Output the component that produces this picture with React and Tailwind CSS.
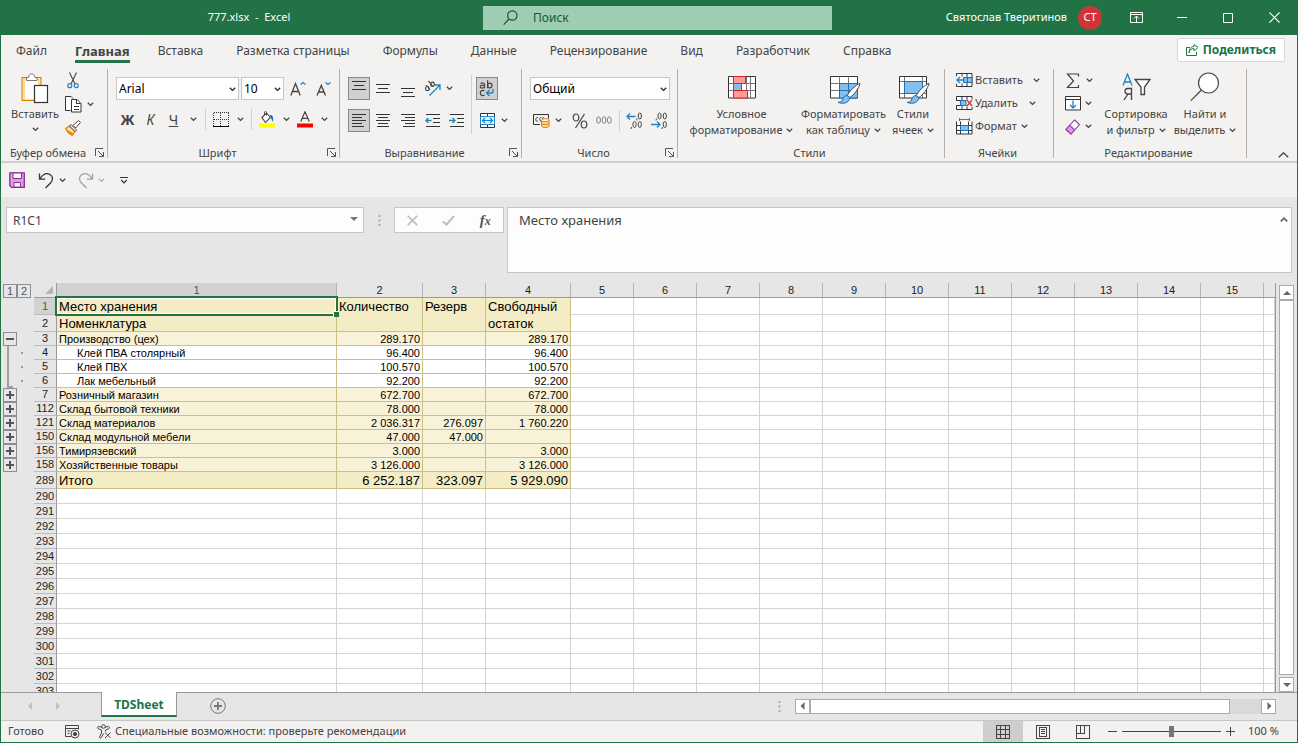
import React from "react";

const Chevron = ({ className = "text-[#444]" }) => (
  <svg className={`shrink-0 ${className}`} width="7" height="5" viewBox="0 0 7 5" fill="none" stroke="currentColor" strokeWidth="1.3">
    <path d="M.8 .8 3.5 3.4 6.2 .8" />
  </svg>
);

const PasteIcon = () => (
  <svg width="28" height="31" viewBox="0 0 28 31" fill="none">
    <rect x="1" y="4.5" width="19" height="23" fill="#fddc9c" stroke="#e07b00" />
    <path d="M4 7h13v19H4z" fill="#fff" />
    <path d="M5.500 7.500V4.500h2c.5-5 6-5 6.500 0h2v3z" fill="#fff" stroke="#777" />
    <rect x="13.5" y="12.500" width="13" height="17" fill="#fff" stroke="#333" strokeWidth="1.200" />
  </svg>
);

const CutIcon = () => (
  <svg width="12" height="17" viewBox="0 0 12 17" fill="none">
    <path d="M2.500 .5 8 12M9.500 .5 4 12" stroke="#444" strokeWidth="1.100" />
    <circle cx="2.800" cy="13.700" r="2" stroke="#1f83c9" strokeWidth="1.200" />
    <circle cx="9.200" cy="13.700" r="2" stroke="#1f83c9" strokeWidth="1.200" />
  </svg>
);

const CopyIcon = () => (
  <svg width="17" height="17" viewBox="0 0 17 17" fill="none" stroke="#333">
    <path d="M5.500 14.500h-5V.5h5.500l2 2" fill="#fff" />
    <path d="M6.500 3.500h5.500l4 4v8.500H6.500z" fill="#fff" />
    <path d="M11.500 3.500v4h4M9 10.500h5M9 13.500h5" />
  </svg>
);

const BrushIcon = () => (
  <svg width="16" height="16" viewBox="0 0 16 16" fill="none">
    <path d="M.8 8.500 4.500 6 10 11.500 7 15.300C4.500 14 2 12 .8 8.500z" fill="#fddc9c" stroke="#e07b00" strokeWidth="1.200" />
    <path d="M1.500 9.500 8 13 6.500 15C4 14 2.500 12 1.500 9.500z" fill="#e8842a" />
    <path d="m4.500 6 1.500-1.500L11.500 10 10 11.500z" fill="#fff" stroke="#444" />
    <path d="m8 5.500 5.500-5 2 2-5 5.500z" fill="#fff" stroke="#444" />
  </svg>
);

const GrowFont = ({ down }) => (
  <svg width="16" height="16" viewBox="0 0 16 16" fill="none">
    {down ? (
      <path d="M1 14.500 5.300 4.500 9.500 14.500M2.500 11h5.500" stroke="#444" strokeWidth="1.300" />
    ) : (
      <path d="M.8 14.500 5.500 2.500 10.200 14.500M2.500 10.500h6" stroke="#444" strokeWidth="1.300" />
    )}
    <path d={down ? "m9.500 1.500 2.500 2 2.500-2" : "M10.500 3.500 13 1.500l2.500 2"} stroke="#1f83c9" strokeWidth="1.300" />
  </svg>
);

const BordersIcon = () => (
  <svg width="16" height="16" viewBox="0 0 16 16" fill="none" stroke="#333" shapeRendering="crispEdges">
    <path d="M.5 .5h15M.5 7.500h15M.5 .5v13M7.500 .5v13M15.500 .5v13" strokeDasharray="1 1" />
    <path d="M0 14.500h16" stroke="#000" strokeWidth="1" />
  </svg>
);

const FillIcon = () => (
  <svg width="16" height="17" viewBox="0 0 16 17" fill="none">
    <path d="M3 6.500 7.500 2l4 4.500-5 5z" fill="#fff" stroke="#444" strokeWidth="1.100" />
    <path d="M7.500 4.500V1.500c0-1.300-2-1.300-2 0V4" stroke="#444" />
    <path d="M11 4c3 0 3.500 2.500 3 6.500-1-.5-1-2.500-2.500-4z" fill="#1f6fb5" />
    <path d="M0 12.500h16v4H0z" fill="#ff0" />
  </svg>
);

const FontColorIcon = () => (
  <svg width="16" height="17" viewBox="0 0 16 17" fill="none">
    <path d="M3.800 10.500 8 .8l4.200 9.700M5.300 7.300h5.400" stroke="#444" strokeWidth="1.200" />
    <path d="M0 12.500h16v4H0z" fill="#f00" />
  </svg>
);

const Lines = ({ rows }) => (
  <svg width="14" height="16" viewBox="0 0 14 16" stroke="#333" shapeRendering="crispEdges">
    {rows.map(([x1, x2, y]) => (
      <path key={y} d={`M${x1} ${y}.5H${x2}`} />
    ))}
  </svg>
);

const OrientationIcon = () => (
  <svg width="17" height="17" viewBox="0 0 17 17" fill="none">
    <g stroke="#444" strokeWidth="1.100">
      <ellipse cx="3.300" cy="8.800" rx="1.800" ry="2" />
      <path d="M1.500 6.200c1.500-1.200 3-.2 4.200 3.600M4.500 .8l4.500 6" />
      <ellipse cx="8.500" cy="4.300" rx="1.900" ry="2.200" />
    </g>
    <path d="M5.500 15.500 15.500 5.500M11 5h5v5" stroke="#1f83c9" strokeWidth="1.300" />
  </svg>
);

const WrapIcon = () => (
  <svg width="16" height="18" viewBox="0 0 16 18" fill="none" strokeWidth="1.200">
    <g stroke="#444">
      <path d="M1.500 3.500c1.500-1 4-.8 4 1.200v3.500M5.500 5.300c-2-.2-4.300 0-4.300 1.500s3 1.800 4.300 0M8.600 .3v8" />
      <ellipse cx="10.800" cy="5.600" rx="2.200" ry="2.400" />
      <path d="M5.500 11c-2-1.300-4.200-.3-4.200 2s2.200 3.300 4.200 2" />
    </g>
    <path d="M14 9v2.500c0 1-.5 1.500-1.500 1.500H7.500M10.500 10l-3 3 3 3" stroke="#1f83c9" strokeWidth="1.400" />
  </svg>
);

const IndentIcon = ({ right }) => (
  <svg width="15" height="15" viewBox="0 0 15 15" fill="none">
    <path d="M1 1.500h14M8 5.500h7M8 9.500h7M1 13.500h14" stroke="#333" shapeRendering="crispEdges" />
    <path d={right ? "M0 7.500h6M3.500 5 6 7.500 3.500 10" : "M6.500 7.500H.8M3.300 5 .8 7.500l2.500 2.500"} stroke="#1f83c9" strokeWidth="1.300" />
  </svg>
);

const MergeIcon = () => (
  <svg width="15" height="15" viewBox="0 0 15 15" fill="none">
    <path d="M.5 .5h14v14H.5zM7.500 .5v3M7.500 11.500v3" fill="#fff" stroke="#333" />
    <path d="M.5 3.500h14v8H.5z" fill="#e3f1fb" stroke="#1f83c9" />
    <path d="M2.500 7.500h10M5 5 2.500 7.500 5 10M10 5l2.500 2.500L10 10" stroke="#1f83c9" strokeWidth="1.200" />
  </svg>
);

const CurrencyIcon = () => (
  <svg width="17" height="14" viewBox="0 0 17 14" fill="none">
    <path d="M7 10.500H.5V.5h15v4" stroke="#333" />
    <path d="M5 3.500c-3-.7-3 4.500 0 3.800M8.500 3.300c-2.500 0-2.500 4 0 4M11 3.300c-1 0-1.500 1-1.500 2" stroke="#444" />
    <path d="M8.500 6.200v6c1 1.800 6.500 1.800 7.500 0v-6" fill="#fddc9c" stroke="#e07b00" />
    <ellipse cx="12.200" cy="6.200" rx="3.700" ry="1.500" fill="#fff" stroke="#e07b00" />
    <path d="M8.500 9.200c1 1.800 6.500 1.800 7.500 0" stroke="#e07b00" />
  </svg>
);

const PercentIcon = () => (
  <svg width="16" height="16" viewBox="0 0 16 16" fill="none" stroke="#444" strokeWidth="1.200">
    <ellipse cx="4" cy="4.500" rx="2.800" ry="3.500" />
    <ellipse cx="12" cy="11.500" rx="2.800" ry="3.500" />
    <path d="M12.500 1 3.500 15" />
  </svg>
);

const ThousandsIcon = () => (
  <svg width="17" height="10" viewBox="0 0 17 10" fill="none" stroke="#777">
    <ellipse cx="2.700" cy="4" rx="2" ry="3.500" />
    <ellipse cx="8.400" cy="4" rx="2" ry="3.500" />
    <ellipse cx="14.100" cy="4" rx="2" ry="3.500" />
  </svg>
);

const DecimalIcon = ({ less }) => (
  <svg width="17" height="17" viewBox="0 0 17 17" fill="none">
    <g stroke="#444">
      <ellipse cx="13.800" cy="4" rx="1.600" ry="3" />
      <ellipse cx="13.800" cy="12.500" rx="1.600" ry="3" />
      {less ? <ellipse cx="8.500" cy="4" rx="1.600" ry="3" /> : <ellipse cx="8.500" cy="12.500" rx="1.600" ry="3" />}
      <path d={less ? "M5.500 6.500 5 8.500M11.200 15v2" : "M10.800 6.500v2M5.500 15 5 17"} />
    </g>
    <path d={less ? "M0 12.500h9M6 9.500l3 3-3 3" : "M9.500 4.500H1M4 1.500 1 4.500l3 3"} stroke="#1f83c9" strokeWidth="1.300" />
  </svg>
);

const ConditionalIcon = () => (
  <svg width="28" height="23" viewBox="0 0 28 23" fill="none">
    <path d="M.5 .5h27v21.500H.5z" fill="#fff" />
    <path d="M.5 7.500h27M.5 14.500h27M5.500 .5v21M18.500 .5v21M22.500 .5v21" stroke="#777" />
    <path d="M.5 .5h27v21.500H.5z" stroke="#333" />
    <path d="M5.500 .5h12v7h-12z" fill="#ff9a9a" stroke="#d22" />
    <path d="M5.500 7.500h8v7h-8z" fill="#83beec" stroke="#1f6fb5" />
    <path d="M5.500 14.500h14V22h-14z" fill="#ff9a9a" stroke="#d22" />
  </svg>
);

const PaintBrush = () => (
  <g>
    <path d="M30 7.500C26 8.500 19 15.500 17.300 19.500l2.500 2C23.500 19.500 29 12.500 30 7.500z" fill="#fff" stroke="#444" />
    <path d="M17 19.500c-3 0-4 2.500-4.500 4.500-.5 1.500-2.500 2.300-4.500 2.300 3 1.500 11 2 11.800-4.500z" fill="#83beec" stroke="#1f6fb5" />
  </g>
);

const FormatTableIcon = () => (
  <svg className="overflow-visible" width="28" height="23" viewBox="0 0 28 23" fill="none">
    <path d="M.5 .5h27v21.500H.5z" fill="#fff" stroke="#333" />
    <path d="M9.500 7.500h18V22h-18z" fill="#83beec" />
    <path d="M.5 7.500h9M.5 14.500h9M9.500 .5v21.500M18.500 .5v7" stroke="#777" />
    <path d="M9.500 22V7.500h18V22zM9.500 14.500h18M18.500 7.500V22" stroke="#1f6fb5" />
    <PaintBrush />
  </svg>
);

const CellStylesIcon = () => (
  <svg className="overflow-visible" width="28" height="23" viewBox="0 0 28 23" fill="none">
    <path d="M.5 .5h27v21.500H.5z" fill="#fff" />
    <path d="M.5 5.500h27M.5 17.500h27M5.500 .5v21.500M23.500 .5v21.500" stroke="#777" />
    <path d="M.5 .5h27v21.500H.5z" stroke="#333" />
    <path d="M5.500 5.500h18v12h-18z" fill="#83beec" stroke="#1f6fb5" />
    <PaintBrush />
  </svg>
);

const CellsInsertIcon = () => (
  <svg width="17" height="15" viewBox="0 0 17 15" fill="none">
    <path d="M1 .5h15v13H1z" fill="#fff" />
    <path d="M.5 3.500V.5H16v13H.5v-3M6 .5v13M11 .5v13M1 4.500h15M1 9.500h15" stroke="#333" />
    <path d="M0 3.500h8v7H0z" fill="#f3f2f1" />
    <path d="M7.500 4.500H16v5H7.500zM11.500 4.500v5" fill="#83beec" stroke="#1f6fb5" />
    <path d="M8.500 7H1M4 4 1 7l3 3" stroke="#1f83c9" strokeWidth="1.400" />
  </svg>
);

const CellsDeleteIcon = () => (
  <svg width="17" height="15" viewBox="0 0 17 15" fill="none">
    <path d="M.5 .5H16v13H.5z" fill="#fff" />
    <path d="M.5 4.500V.5H16v3M.5 9.500v4H16v-3M6 .5v13M11 .5v13M.5 4.500H6M.5 9.500H6" stroke="#333" />
    <path d="M0 5h4v4H0z" fill="#f3f2f1" />
    <path d="M4.500 4.500H10v5H4.500z" fill="#83beec" stroke="#1f6fb5" />
    <path d="M10.500 3.500H17v7h-6.500z" fill="#f3f2f1" />
    <path d="m11 4 5 6M16 4l-5 6" stroke="#e0343a" strokeWidth="1.400" />
  </svg>
);

const CellsFormatIcon = () => (
  <svg width="17" height="17" viewBox="0 0 17 17" fill="none">
    <path d="M.5 3.500h15.500v12.500H.5z" fill="#fff" />
    <path d="M.5 3.500V16H16V3.500M4.500 3.500V16M12.500 3.500V16M.5 7.500H16M.5 12.500H16" stroke="#333" />
    <path d="M4.500 7.500h8v5h-8z" fill="#83beec" stroke="#1f6fb5" />
    <path d="M3.500 1.500h10M3.500 0v3M13.500 0v3" stroke="#1f83c9" />
  </svg>
);

const SigmaIcon = () => (
  <svg width="14" height="16" viewBox="0 0 14 16" fill="none" stroke="#444" strokeWidth="1.200">
    <path d="M12.500 3.500V1h-11l6 7-6 6.500h11V12" />
  </svg>
);

const FillDownIcon = () => (
  <svg width="16" height="15" viewBox="0 0 16 15" fill="none">
    <path d="M.5 .5h15v13.500H.5zM.5 3.500h15" fill="#fff" stroke="#333" />
    <path d="M8 4.500V12M5 9l3 3 3-3" stroke="#1f83c9" strokeWidth="1.300" />
  </svg>
);

const EraserIcon = () => (
  <svg width="16" height="16" viewBox="0 0 16 16" fill="none" stroke="#8f3fa8" strokeWidth="1.100">
    <path d="m9.500 1 5 4.500-8.500 9.500-5-4.500z" fill="#fff" />
    <path d="m4.700 6.500 5 4.300L6 15l-5-4.500z" fill="#d9a0e2" />
  </svg>
);

const SortFilterIcon = () => (
  <svg width="29" height="28" viewBox="0 0 29 28" fill="none" strokeWidth="1.300">
    <path d="M1 12.500 5.500 1l4.500 11.500M2.500 9h6" stroke="#1f83c9" />
    <path d="M9.500 27V15.500H6c-4 0-4 5.500 0 5.500h3.500M6 21l-4 6" stroke="#444" />
    <path d="M13 6.500h15l-5.500 7.500v7.500h-3.500V14z" fill="#fff" stroke="#444" />
  </svg>
);

const FindIcon = () => (
  <svg width="30" height="30" viewBox="0 0 30 30" fill="none" stroke="#444" strokeWidth="1.200">
    <circle cx="18.500" cy="11" r="10" fill="#fff" />
    <path d="M11.500 18 .8 28.700" />
  </svg>
);

const LauncherIcon = () => (
  <svg width="9" height="9" viewBox="0 0 9 9" fill="none" stroke="#555">
    <path d="M.5 8V.5H8M3 3l5 5M8.500 4v4.500H4" />
  </svg>
);

const Group = ({ label, width, launcher, children }) => (
  <section aria-label={label} className={`flex h-[89px] shrink-0 flex-col border-r border-[#b3b0ad] ${width}`}>
    <div className="flex h-[78px] min-w-0 shrink-0">{children}</div>
    <div className="flex h-[11px] items-center pr-[3px] text-[11px] leading-[11px]">
      <span className="flex-1 whitespace-nowrap text-center">{label}</span>
      {launcher && (
        <button aria-label={`Параметры: ${label}`}>
          <LauncherIcon />
        </button>
      )}
    </div>
  </section>
);

const IconBtn = ({ label, w = "w-[24px]", h = "h-[23px]", on, children }) => (
  <button
    aria-label={label}
    className={`flex shrink-0 items-center justify-center ${w} ${h} ${on ? "border border-[#8a8886] bg-[#d2d0ce]" : ""}`}
  >
    {children}
  </button>
);

const Combo = ({ label, value, w }) => (
  <div className={`relative h-[23px] shrink-0 ${w}`}>
    <select aria-label={label} className="h-full w-full appearance-none border border-[#c8c6c4] bg-white pl-[2px] text-[12px] leading-[20px] text-black">
      <option>{value}</option>
    </select>
    <Chevron className="pointer-events-none absolute right-[3px] top-[10px] text-[#222]" />
  </div>
);

const VRule = ({ className }) => <div className={`w-px shrink-0 bg-[#d2d0ce] ${className}`} />;

const BigBtn = ({ icon, l1, l2, w }) => (
  <button className={`flex shrink-0 flex-col items-center leading-[16px] ${w}`}>
    <span className="mb-[2px] flex h-[34px] items-center">{icon}</span>
    <span className="whitespace-nowrap">{l1}</span>
    <span className="flex items-center gap-1 whitespace-nowrap">
      {l2}
      <Chevron />
    </span>
  </button>
);

const TABS = ["Файл", "Главная", "Вставка", "Разметка страницы", "Формулы", "Данные", "Рецензирование", "Вид", "Разработчик", "Справка"];

const TitleBar = () => (
  <header className="flex h-[35px] shrink-0 items-center bg-[#217346] text-[11px] text-white">
    <h1 className="w-[482px] shrink-0 whitespace-pre pl-[14px] text-center">777.xlsx  -  Excel</h1>
    <label className="flex h-[24px] w-[349px] shrink-0 items-center bg-[#9fcdb3] pl-[20px] text-[12px] text-[#0e5c2f]">
      <svg width="15" height="16" viewBox="0 0 15 16" fill="none" stroke="currentColor" strokeWidth="1.200">
        <circle cx="9.300" cy="5.500" r="4.700" />
        <path d="M6 9 .7 14.700" />
      </svg>
      <input aria-label="Поиск" placeholder="Поиск" className="ml-[15px] w-[200px] bg-transparent outline-none placeholder:text-[#0e5c2f]" />
    </label>
    <div className="flex flex-1 items-center justify-end">
      <span className="whitespace-nowrap">Святослав Тверитинов</span>
      <span className="ml-[11px] flex size-[24px] items-center justify-center rounded-full bg-[#d13438]">СТ</span>
      <button aria-label="Параметры отображения ленты" className="ml-[11px] flex h-[34px] w-[46px] items-center justify-center">
        <svg width="13" height="11" viewBox="0 0 13 11" fill="none" stroke="#fff">
          <path d="M.5 .5h12v10H.5zM.5 2.500h12M6.500 10V4.500M4 6.500 6.500 4 9 6.500" />
        </svg>
      </button>
      <button aria-label="Свернуть" className="flex h-[34px] w-[46px] items-center justify-center">
        <svg width="10" height="2" viewBox="0 0 10 2"><path d="M0 .5h10" stroke="#fff" /></svg>
      </button>
      <button aria-label="Развернуть" className="flex h-[34px] w-[46px] items-center justify-center">
        <svg width="10" height="10" viewBox="0 0 10 10"><path d="M.5 .5h9v9h-9z" fill="none" stroke="#fff" /></svg>
      </button>
      <button aria-label="Закрыть" className="flex h-[34px] w-[46px] items-center justify-center">
        <svg width="11" height="11" viewBox="0 0 11 11"><path d="m.5 .5 10 10M10.500 .5l-10 10" stroke="#fff" strokeWidth="1.100" /></svg>
      </button>
    </div>
  </header>
);

const TabStrip = () => (
  <nav className="flex h-[34px] shrink-0 items-start justify-between pl-[15px] pr-[12px] pt-[3px]">
    <div className="flex gap-[33px] pt-[1px]">
      {TABS.map((t) => (
        <a
          key={t}
          href="#"
          className={`h-[24px] whitespace-nowrap leading-[24px] ${t === "Главная" ? "-mx-[5px] border-b-3 border-[#217346] text-[13px] font-bold" : "text-[12px]"}`}
        >
          {t}
        </a>
      ))}
    </div>
    <button className="flex h-[24px] items-center gap-[4px] rounded-[2px] border border-[#d8d6d4] bg-white px-[8px] text-[12px] font-bold text-[#217346]">
      <svg width="13" height="12" viewBox="0 0 13 12" fill="none" stroke="currentColor">
        <path d="M4 3.500H.5v8h10V8M3 9c.5-3 2-4.500 5-4.500v2.500l4-3.500-4-3v2C5 2.500 3.200 5 3 9z" />
      </svg>
      Поделиться
    </button>
  </nav>
);

const Ribbon = () => (
  <div className="flex h-[94px] shrink-0 items-start border-b-2 border-[#d2d0ce] text-[11px]">
    <Group label="Буфер обмена" width="w-[107px]" launcher>
      <button className="flex w-[62px] flex-col items-center pl-[6px] pt-[4px] leading-[16px]">
        <PasteIcon />
        <span className="mt-[2px]">Вставить</span>
        <span className="mt-[5px]"><Chevron /></span>
      </button>
      <div className="flex flex-col">
        <IconBtn label="Вырезать" w="w-[20px]"><CutIcon /></IconBtn>
        <div className="flex">
          <IconBtn label="Копировать" w="w-[20px]" h="h-[24px]"><CopyIcon /></IconBtn>
          <IconBtn label="Варианты копирования" w="w-[14px]" h="h-[24px]"><Chevron /></IconBtn>
        </div>
        <IconBtn label="Формат по образцу" w="w-[20px]"><BrushIcon /></IconBtn>
      </div>
    </Group>

    <Group label="Шрифт" width="w-[232px]" launcher>
      <div className="flex flex-col gap-[8px] pl-[8px] pt-[8px]">
        <div className="flex gap-[2px]">
          <Combo label="Шрифт" value="Arial" w="w-[123px]" />
          <Combo label="Размер шрифта" value="10" w="w-[43px]" />
          <IconBtn label="Увеличить размер шрифта"><GrowFont /></IconBtn>
          <IconBtn label="Уменьшить размер шрифта"><GrowFont down /></IconBtn>
        </div>
        <div className="flex items-center text-[14px]">
          <IconBtn label="Полужирный" w="w-[23px]"><b>Ж</b></IconBtn>
          <IconBtn label="Курсив" w="w-[23px]"><i>К</i></IconBtn>
          <IconBtn label="Подчёркнутый" w="w-[23px]"><u>Ч</u></IconBtn>
          <IconBtn label="Вид подчёркивания" w="w-[16px]"><Chevron /></IconBtn>
          <VRule className="ml-[4px] h-[21px]" />
          <IconBtn label="Границы" w="w-[30px]"><BordersIcon /></IconBtn>
          <IconBtn label="Вид границ" w="w-[8px]"><Chevron /></IconBtn>
          <VRule className="ml-[7px] h-[21px]" />
          <IconBtn label="Цвет заливки" w="w-[30px]"><FillIcon /></IconBtn>
          <IconBtn label="Выбор заливки" w="w-[8px]"><Chevron /></IconBtn>
          <IconBtn label="Цвет текста" w="w-[30px]"><FontColorIcon /></IconBtn>
          <IconBtn label="Выбор цвета текста" w="w-[8px]"><Chevron /></IconBtn>
        </div>
      </div>
    </Group>

    <Group label="Выравнивание" width="w-[182px]" launcher>
      <div className="flex flex-col gap-[9px] pl-[8px] pt-[8px]">
        <div className="flex gap-[1px]">
          <IconBtn label="По верхнему краю" w="w-[22px]" on><Lines rows={[[0, 14, 0], [2, 12, 4], [0, 14, 8]]} /></IconBtn>
          <IconBtn label="По середине"><Lines rows={[[0, 14, 3], [2, 12, 7], [0, 14, 11]]} /></IconBtn>
          <IconBtn label="По нижнему краю" w="w-[23px]"><Lines rows={[[0, 14, 7], [2, 12, 11], [0, 14, 15]]} /></IconBtn>
          <IconBtn label="Ориентация"><OrientationIcon /></IconBtn>
          <IconBtn label="Варианты ориентации" w="w-[8px]"><Chevron /></IconBtn>
        </div>
        <div className="flex gap-[1px]">
          <IconBtn label="По левому краю" w="w-[22px]" on><Lines rows={[[0, 14, 1], [0, 10, 4], [0, 14, 7], [0, 10, 10], [0, 12, 13]]} /></IconBtn>
          <IconBtn label="По центру"><Lines rows={[[0, 14, 1], [2, 12, 4], [0, 14, 7], [2, 12, 10], [1, 13, 13]]} /></IconBtn>
          <IconBtn label="По правому краю" w="w-[23px]"><Lines rows={[[0, 14, 1], [4, 14, 4], [0, 14, 7], [4, 14, 10], [2, 14, 13]]} /></IconBtn>
          <IconBtn label="Уменьшить отступ"><IndentIcon /></IconBtn>
          <IconBtn label="Увеличить отступ" w="w-[23px]"><IndentIcon right /></IconBtn>
        </div>
      </div>
      <VRule className="ml-[3px] mt-[6px] h-[59px]" />
      <div className="flex flex-col gap-[9px] pl-[4px] pt-[8px]">
        <IconBtn label="Перенести текст" w="w-[22px]" on><WrapIcon /></IconBtn>
        <div className="flex">
          <IconBtn label="Объединить и поместить в центре" w="w-[22px]"><MergeIcon /></IconBtn>
          <IconBtn label="Варианты объединения" w="w-[12px]"><Chevron /></IconBtn>
        </div>
      </div>
    </Group>

    <Group label="Число" width="w-[156px]" launcher>
      <div className="flex flex-col gap-[9px] pl-[8px] pt-[8px]">
        <Combo label="Числовой формат" value="Общий" w="w-[140px]" />
        <div className="flex items-center">
          <IconBtn label="Финансовый формат" w="w-[23px]"><CurrencyIcon /></IconBtn>
          <IconBtn label="Выбор валюты" w="w-[10px]"><Chevron /></IconBtn>
          <IconBtn label="Процентный формат" w="w-[33px]"><PercentIcon /></IconBtn>
          <IconBtn label="Формат с разделителями" w="w-[16px]"><ThousandsIcon /></IconBtn>
          <VRule className="ml-[7px] h-[21px]" />
          <IconBtn label="Увеличить разрядность" w="w-[29px]"><DecimalIcon /></IconBtn>
          <IconBtn label="Уменьшить разрядность" w="w-[20px]"><DecimalIcon less /></IconBtn>
        </div>
      </div>
    </Group>

    <Group label="Стили" width="w-[267px]">
      <div className="flex w-full items-start pl-[8px] pt-[1px]">
        <BigBtn w="w-[111px]" icon={<ConditionalIcon />} l1="Условное" l2="форматирование" />
        <BigBtn w="w-[93px]" icon={<FormatTableIcon />} l1="Форматировать" l2="как таблицу" />
        <BigBtn w="w-[46px]" icon={<CellStylesIcon />} l1="Стили" l2="ячеек" />
      </div>
    </Group>

    <Group label="Ячейки" width="w-[109px]">
      <div className="flex flex-col pl-[11px]">
        <button className="flex h-[23px] items-center"><CellsInsertIcon /><span className="ml-[2px] w-[58px] text-left">Вставить</span><Chevron /></button>
        <button className="flex h-[23px] items-center"><CellsDeleteIcon /><span className="ml-[2px] w-[54px] text-left">Удалить</span><Chevron /></button>
        <button className="flex h-[23px] items-center"><CellsFormatIcon /><span className="ml-[2px] w-[46px] text-left">Формат</span><Chevron /></button>
      </div>
    </Group>

    <Group label="Редактирование" width="w-[193px]">
      <div className="flex flex-col pl-[9px]">
        <button aria-label="Автосумма" className="flex h-[23px] items-center gap-[6px] pl-[3px]"><SigmaIcon /><Chevron /></button>
        <button aria-label="Заполнить" className="flex h-[23px] items-center gap-[4px] pl-[2px]"><FillDownIcon /><Chevron /></button>
        <button aria-label="Очистить" className="flex h-[23px] items-center gap-[4px] pl-[2px]"><EraserIcon /><Chevron /></button>
      </div>
      <div className="flex items-start pl-[8px] pt-[1px]">
        <BigBtn w="w-[70px]" icon={<SortFilterIcon />} l1="Сортировка" l2="и фильтр" />
        <BigBtn w="w-[68px]" icon={<FindIcon />} l1="Найти и" l2="выделить" />
      </div>
    </Group>

    <button aria-label="Свернуть ленту" className="ml-auto mr-[8px] mt-[83px]">
      <svg width="11" height="6" viewBox="0 0 11 6" fill="none" stroke="#444" strokeWidth="1.300"><path d="M.8 5.200 5.500 .8l4.700 4.400" /></svg>
    </button>
  </div>
);

const QuickAccess = () => (
  <div className="flex h-[34px] shrink-0 items-center pl-[8px]">
    <button aria-label="Сохранить">
      <svg width="16" height="16" viewBox="0 0 16 16" fill="#d9a0e2" stroke="#8a2b96">
        <path d="M.8 .8h14.500v14.500H2.500L.8 13.500z" strokeWidth="1.300" />
        <path d="M4 1h8.500v5.500H4zM5 15v-4.500h6.500V15z" fill="#fff" />
      </svg>
    </button>
    <button aria-label="Отменить" className="ml-[13px]">
      <svg width="16" height="17" viewBox="0 0 16 17" fill="none" stroke="#333" strokeWidth="1.300"><path d="M1.500 1.500v5.700h5.700M1.800 7C5 2 9 .8 12 2.500c3.500 2 3 6 .5 8.500L7.500 16" /></svg>
    </button>
    <button aria-label="Список отмен" className="ml-[5px]"><Chevron /></button>
    <button aria-label="Вернуть" className="ml-[12px]">
      <svg width="16" height="17" viewBox="0 0 16 17" fill="none" stroke="#a19f9d" strokeWidth="1.300"><path d="M14.500 1.500v5.700H8.800M14.200 7C11 2 7 .8 4 2.500c-3.500 2-3 6-.5 8.500l5 5" /></svg>
    </button>
    <button aria-label="Список возвратов" className="ml-[4px]"><Chevron className="text-[#b3b0ad]" /></button>
    <button aria-label="Настройка панели быстрого доступа" className="ml-[15px]">
      <svg width="8" height="7" viewBox="0 0 8 7" fill="none" stroke="#333"><path d="M0 .5h8M1.200 3 4 5.800 6.800 3" strokeWidth="1.200" /></svg>
    </button>
  </div>
);

const Dots = () => (
  <svg width="3" height="11" viewBox="0 0 3 11" fill="#aaa"><path d="M.5 0h2v2h-2zM.5 4.500h2v2h-2zM.5 9h2v2h-2z" /></svg>
);

const FormulaBar = () => (
  <div className="flex h-[86px] shrink-0 items-start bg-[#e6e6e6] px-[5px] pt-[10px] text-[13px] text-[#444]">
    <div className="relative h-[26px] w-[358px] shrink-0">
      <input aria-label="Поле имени" defaultValue="R1C1" className="h-full w-full border border-[#c6c6c6] bg-[#fdfdfd] pl-[6px] text-[12px] outline-none" />
      <svg className="absolute right-[6px] top-[10px]" width="8" height="4" viewBox="0 0 8 4"><path d="M0 0h8L4 4z" fill="#777" /></svg>
    </div>
    <div className="flex h-[26px] w-[30px] shrink-0 items-center justify-center"><Dots /></div>
    <div className="mr-[3px] flex h-[26px] w-[110px] shrink-0 items-center justify-around border border-[#c6c6c6] bg-[#fdfdfd]">
      <button aria-label="Отмена">
        <svg width="11" height="11" viewBox="0 0 11 11" stroke="#c0c0c0" strokeWidth="1.800"><path d="m.8 .8 9.400 9.400M10.200 .8.8 10.200" /></svg>
      </button>
      <button aria-label="Ввод">
        <svg width="13" height="11" viewBox="0 0 13 11" fill="none" stroke="#c0c0c0" strokeWidth="2.200"><path d="M.8 6.500 4.500 9.500 12 1" /></svg>
      </button>
      <button aria-label="Вставить функцию" className="font-['Liberation_Serif',serif] text-[15px] font-bold italic leading-[20px] text-[#555]">
        f<span className="text-[12px]">x</span>
      </button>
    </div>
    <div className="relative h-[66px] min-w-0 flex-1">
      <textarea aria-label="Строка формул" defaultValue="Место хранения" className="block h-full w-full resize-none border border-[#c6c6c6] bg-[#fdfdfd] pl-[11px] pt-[3px] leading-[18px] outline-none" />
      <svg className="absolute right-[4px] top-[10px]" width="8" height="5" viewBox="0 0 8 5" fill="none" stroke="#666" strokeWidth="1.800"><path d="M.8 4.300 4 1.200l3.200 3.100" /></svg>
    </div>
  </div>
);

const BODY = [
  { n: 3, name: "Производство (цех)", q: "289.170", r: "", f: "289.170", mark: "−" },
  { n: 4, name: "Клей ПВА столярный", q: "96.400", r: "", f: "96.400", child: true },
  { n: 5, name: "Клей ПВХ", q: "100.570", r: "", f: "100.570", child: true },
  { n: 6, name: "Лак мебельный", q: "92.200", r: "", f: "92.200", child: true, last: true },
  { n: 7, name: "Розничный магазин", q: "672.700", r: "", f: "672.700", mark: "+" },
  { n: 112, name: "Склад бытовой техники", q: "78.000", r: "", f: "78.000", mark: "+", green: true },
  { n: 121, name: "Склад материалов", q: "2 036.317", r: "276.097", f: "1 760.220", mark: "+" },
  { n: 150, name: "Склад модульной мебели", q: "47.000", r: "47.000", f: "", mark: "+" },
  { n: 156, name: "Тимирязевский", q: "3.000", r: "", f: "3.000", mark: "+" },
  { n: 158, name: "Хозяйственные товары", q: "3 126.000", r: "", f: "3 126.000", mark: "+" },
];
const EMPTY_COLS = [5, 6, 7, 8, 9, 10, 11, 12, 13, 14, 15, 16];
const EMPTY_ROWS = Array.from({ length: 14 }, (_, i) => 290 + i);

const Empties = () => EMPTY_COLS.map((c) => <td key={c} className="border-b border-r border-[#d4d4d4] p-0" />);

const RowHead = ({ n, on }) => (
  <th
    scope="row"
    className={`border-b border-r border-b-[#bdbdbd] border-r-[#999] p-0 text-center text-[11px] font-normal leading-[13px] ${on ? "bg-[#d2d2d2] text-[#217346]" : "bg-[#e6e6e6] text-[#222]"}`}
  >
    {n}
  </th>
);

const gold = "border-b border-r border-[#ccc085]";
const head = `bg-[#f4ecc5] p-0 pt-[2px] leading-[14px] ${gold}`;

const Sheet = () => (
  <div className="min-w-0 flex-1 overflow-hidden border-r border-[#999] bg-white font-['Liberation_Sans',Arial,sans-serif]">
    <table className="w-full table-fixed border-separate border-spacing-0 text-[11px] text-black">
      <colgroup>
        <col className="w-[33px]" />
        <col className="w-[23px]" />
        <col className="w-[280px]" />
        <col className="w-[86px]" />
        <col className="w-[63px]" />
        <col className="w-[85px]" />
        {EMPTY_COLS.map((c) => (c < 16 ? <col key={c} className="w-[63px]" /> : <col key={c} />))}
      </colgroup>
      <thead>
        <tr className="h-[15px] bg-[#e6e6e6] leading-[14px]">
          <td className="p-0 pl-[2px]">
            <div className="flex h-[14px]">
              <button className="h-[14px] w-[14px] border border-[#8a8f96] text-center text-[11px] leading-[12px] text-[#555]">1</button>
              <button className="h-[14px] w-[14px] border border-[#8a8f96] text-center text-[11px] leading-[12px] text-[#555]">2</button>
            </div>
          </td>
          <td className="border-b border-r border-[#999] p-0">
            <svg className="ml-auto mr-[3px]" width="8" height="8" viewBox="0 0 8 8"><path d="M8 0v8H0z" fill="#b4b4b4" /></svg>
          </td>
          {Array.from({ length: 16 }, (_, i) => (
            <th
              key={i}
              scope="col"
              className={`border-b border-b-[#999] p-0 font-normal ${i < 15 ? "border-r border-r-[#b4b4b4]" : ""} ${i === 0 ? "bg-[#d2d2d2] text-[#217346]" : "text-[#222]"}`}
            >
              {i < 15 ? i + 1 : ""}
            </th>
          ))}
        </tr>
      </thead>
      <tbody>
        <tr className="h-[17px] text-[13px]">
          <td className="bg-[#e6e6e6] p-0" />
          <RowHead n={1} on />
          <td className={`relative pl-[2px] ${head}`}>
            Место хранения
            <div className="pointer-events-none absolute -inset-[2px] border-2 border-[#217346]">
              <div className="absolute inset-0 border border-white" />
              <div className="absolute -bottom-[3px] -right-[3px] size-[6px] border-l border-t border-white bg-[#217346]" />
            </div>
          </td>
          <td rowSpan={2} className={`pl-[2px] align-top ${head}`}>Количество</td>
          <td rowSpan={2} className={`pl-[2px] align-top ${head}`}>Резерв</td>
          <td rowSpan={2} className={`bg-[#f4ecc5] p-0 pl-[2px] align-top leading-[17px] ${gold}`}>
            <div className="h-[33px]">Свободный остаток</div>
          </td>
          <Empties />
        </tr>
        <tr className="h-[17px] text-[13px]">
          <td className="bg-[#e6e6e6] p-0" />
          <RowHead n={2} />
          <td className={`pl-[2px] ${head}`}>Номенклатура</td>
          <Empties />
        </tr>
        {BODY.map((r) => {
          const cell = `p-0 pt-[2px] leading-[11px] ${r.child ? "bg-white" : "bg-[#f8f2d8]"} ${gold}`;
          return (
            <tr key={r.n} className="h-[14px]">
              <td className="bg-[#e6e6e6] p-0 pl-[2px]">
                {r.mark && (
                  <button aria-label={r.mark === "+" ? "Развернуть группу" : "Свернуть группу"} className="flex size-[14px] items-center justify-center border border-[#8a8f96]">
                    <svg width="8" height="8" viewBox="0 0 8 8" stroke="#555" strokeWidth="2"><path d={r.mark === "+" ? "M0 4h8M4 0v8" : "M0 4h8"} /></svg>
                  </button>
                )}
                {r.child && (
                  <div className="flex h-[14px] items-center pl-[4px]">
                    <span className={`w-[6px] self-stretch border-l-2 border-[#a0a0a0] ${r.last ? "border-b-2" : ""}`} />
                    <span className="ml-[8px] size-[2px] bg-[#999]" />
                  </div>
                )}
              </td>
              <RowHead n={r.n} />
              <td className={`whitespace-nowrap ${r.child ? "pl-[20px]" : "pl-[2px]"} ${cell}`}>{r.name}</td>
              <td className={`pr-[2px] text-right ${cell}`}>{r.q}</td>
              <td className={`pr-[2px] text-right ${cell}`}>{r.r}</td>
              <td className={`pr-[2px] text-right ${cell}`}>{r.f}</td>
              <Empties />
            </tr>
          );
        })}
        <tr className="h-[17px] text-[13px]">
          <td className="bg-[#e6e6e6] p-0" />
          <RowHead n={289} />
          <td className={`pl-[2px] ${head}`}>Итого</td>
          <td className={`pr-[2px] text-right ${head}`}>6 252.187</td>
          <td className={`pr-[2px] text-right ${head}`}>323.097</td>
          <td className={`pr-[2px] text-right ${head}`}>5 929.090</td>
          <Empties />
        </tr>
        {EMPTY_ROWS.map((n) => (
          <tr key={n} className="h-[15px] leading-[14px]">
            <td className="bg-[#e6e6e6] p-0" />
            <RowHead n={n} />
            {[1, 2, 3, 4].map((c) => (
              <td key={c} className="border-b border-r border-[#d4d4d4] p-0" />
            ))}
            <Empties />
          </tr>
        ))}
      </tbody>
    </table>
  </div>
);

const ScrollBtn = ({ label, d }) => (
  <button aria-label={label} className="flex size-[15px] shrink-0 items-center justify-center border border-[#ababab] bg-white">
    <svg width="8" height="8" viewBox="0 0 8 8"><path d={d} fill="#666" /></svg>
  </button>
);

const SheetBar = () => (
  <div className="flex h-[28px] shrink-0 items-start border-b border-[#c6c6c6] bg-[#e6e6e6]">
    <div className="flex h-[26px] w-[100px] shrink-0 items-center gap-[24px] pl-[27px]">
      <button aria-label="Предыдущий лист"><svg width="4" height="8" viewBox="0 0 4 8"><path d="M4 0v8L0 4z" fill="#c0c0c0" /></svg></button>
      <button aria-label="Следующий лист"><svg width="4" height="8" viewBox="0 0 4 8"><path d="M0 0v8l4-4z" fill="#c0c0c0" /></svg></button>
    </div>
    <button className="-mt-px h-[25px] w-[76px] shrink-0 border-x border-b-2 border-x-[#999] border-b-[#217346] bg-white pt-[2px] text-[12px] font-bold leading-[22px] text-[#217346]">
      TDSheet
    </button>
    <button aria-label="Новый лист" className="ml-[33px] mt-[5px]">
      <svg width="16" height="16" viewBox="0 0 16 16" fill="none" stroke="#777"><circle cx="8" cy="8" r="7.300" /><path d="M4 8h8M8 4v8" strokeWidth="1.800" /></svg>
    </button>
    <div className="ml-auto flex h-[26px] items-center pr-[21px]">
      <span className="mr-[14px]"><Dots /></span>
      <ScrollBtn label="Прокрутить влево" d="M5.500 0v8L1.500 4z" />
      <div className="h-[15px] w-[420px] border border-[#ababab] bg-white" />
      <div className="h-[15px] w-[31px] bg-[#d9d9d9]" />
      <ScrollBtn label="Прокрутить вправо" d="M2.500 0v8l4-4z" />
    </div>
  </div>
);

const StatusBar = () => (
  <footer className="flex h-[21px] shrink-0 items-center pl-[7px] text-[11px]">
    <span className="w-[57px]">Готово</span>
    <svg width="15" height="14" viewBox="0 0 15 14" fill="none" stroke="#444">
      <path d="M6 11.500H.5V.5h13v4M.5 3.500h13M2.500 6h3M2.500 8.500h2" />
      <circle cx="10" cy="9" r="4" />
      <circle cx="10" cy="9" r="1.600" fill="#444" />
    </svg>
    <button className="ml-[17px] flex items-center gap-[3px] whitespace-nowrap">
      <svg width="15" height="15" viewBox="0 0 15 15" fill="none" stroke="#444">
        <circle cx="6.500" cy="2.500" r="1.800" />
        <path d="M5 3.200 1.300 2.500C0 3 .5 4.500 1.300 4.700L4.500 6v3L2.500 13c0 1.200 1.500 1.200 2 .5l2-4M8 3.200l3.700-.7c1.300.5.8 2 0 2.200L8.500 6v1.500M8 8.500l5.500 5.500M13.500 8.500 8 14" />
      </svg>
      Специальные возможности: проверьте рекомендации
    </button>
    <div className="ml-auto flex items-center">
      <button aria-label="Обычный" className="flex h-[21px] w-[40px] items-center justify-center bg-[#d0cecc]">
        <svg width="14" height="14" viewBox="0 0 14 14" fill="none" stroke="#444" shapeRendering="crispEdges"><path d="M.5 .5h13v13H.5zM.5 4.500h13M.5 9.500h13M4.500 .5v13M9.500 .5v13" /></svg>
      </button>
      <button aria-label="Разметка страницы" className="flex h-[21px] w-[40px] items-center justify-center">
        <svg width="14" height="14" viewBox="0 0 14 14" fill="none" stroke="#444" shapeRendering="crispEdges"><path d="M.5 .5h13v13H.5zM3.500 2.500h7v9h-7zM5 4.500h4M5 6.500h4M5 8.500h4" /></svg>
      </button>
      <button aria-label="Страничный режим" className="flex h-[21px] w-[40px] items-center justify-center">
        <svg width="14" height="14" viewBox="0 0 14 14" fill="none" stroke="#444" shapeRendering="crispEdges"><path d="M.5 .5h13v13H.5zM4.500 .5v8M.5 8.500h8.500M8.500 .5v8" /></svg>
      </button>
      <button aria-label="Уменьшить" className="ml-[5px]"><svg width="9" height="9" viewBox="0 0 9 9" stroke="#444"><path d="M0 4.500h9" /></svg></button>
      <input
        type="range"
        aria-label="Масштаб"
        min="0"
        max="100"
        defaultValue="50"
        className="mx-[5px] h-[13px] w-[99px] appearance-none bg-transparent [&::-webkit-slider-runnable-track]:h-px [&::-webkit-slider-runnable-track]:bg-[#444] [&::-webkit-slider-thumb]:-mt-[5px] [&::-webkit-slider-thumb]:h-[11px] [&::-webkit-slider-thumb]:w-[5px] [&::-webkit-slider-thumb]:appearance-none [&::-webkit-slider-thumb]:bg-[#777]"
      />
      <button aria-label="Увеличить"><svg width="9" height="9" viewBox="0 0 9 9" stroke="#444"><path d="M0 4.500h9M4.500 0v9" /></svg></button>
      <span className="w-[62px] pl-[13px]">100 %</span>
    </div>
  </footer>
);

export default function App() {
  return (
    <div className="flex h-screen w-full flex-col overflow-hidden border-x border-b border-[#217346] bg-[#f3f2f1] font-['Noto_Sans','Open_Sans',sans-serif] text-[#444]">
      <TitleBar />
      <TabStrip />
      <Ribbon />
      <QuickAccess />
      <FormulaBar />
      <main className="flex min-h-0 flex-1 border-b border-[#999] bg-[#e6e6e6]">
        <Sheet />
        <div className="flex w-[21px] shrink-0 flex-col items-center pt-[2px]">
          <ScrollBtn label="Прокрутить вверх" d="M0 6h8L4 2z" />
          <div className="mb-[2px] w-[15px] flex-1 border border-[#ababab] bg-white" />
          <ScrollBtn label="Прокрутить вниз" d="M0 2h8L4 6z" />
        </div>
      </main>
      <SheetBar />
      <StatusBar />
    </div>
  );
}
